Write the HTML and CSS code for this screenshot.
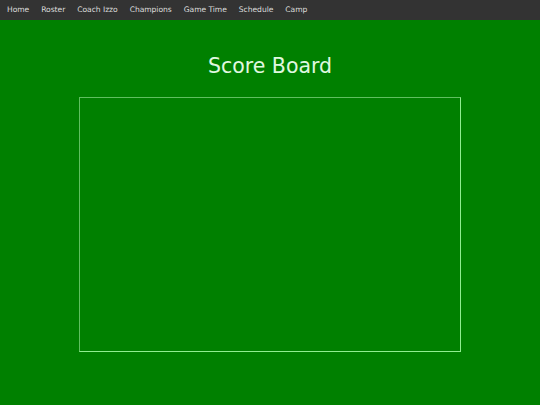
FILE: index.html
```html
<!DOCTYPE html>
<html>
<head>
<meta charset="utf-8">
<link rel="stylesheet" href="styles.css">
</head>
<body>
<nav class="topnav">
  <a href="#">Home</a>
  <a href="#">Roster</a>
  <a href="#">Coach Izzo</a>
  <a href="#">Champions</a>
  <a href="#">Game Time</a>
  <a href="#">Schedule</a>
  <a href="#">Camp</a>
</nav>
<main class="main">
  <h1 class="title">Score Board</h1>
  <div class="board"></div>
</main>
</body>
</html>
```

FILE: styles.css
```css
html, body {
  margin: 0;
  padding: 0;
  height: 100%;
}
body {
  background: #008000;
  font-family: "DejaVu Sans", Verdana, sans-serif;
}
.topnav {
  display: flex;
  height: 20px;
  background: #333333;
}
.topnav a {
  display: block;
  padding: 0 6px;
  line-height: 20px;
  font-size: 7.6px;
  letter-spacing: -0.05px;
  color: #dddddd;
  text-decoration: none;
}
.topnav a:first-child {
  padding-left: 7px;
}
.main {
  display: flex;
  flex-direction: column;
  align-items: center;
}
.title {
  margin: 34px 0 0;
  font-size: 20.5px;
  font-weight: normal;
  line-height: 24px;
  color: #e0f8e0;
}
.board {
  margin-top: 19px;
  width: 380px;
  height: 253px;
  border: 1px solid #90ee90;
  border-left-color: #5fbf5f;
  border-top-color: #5fbf5f;
}
```
